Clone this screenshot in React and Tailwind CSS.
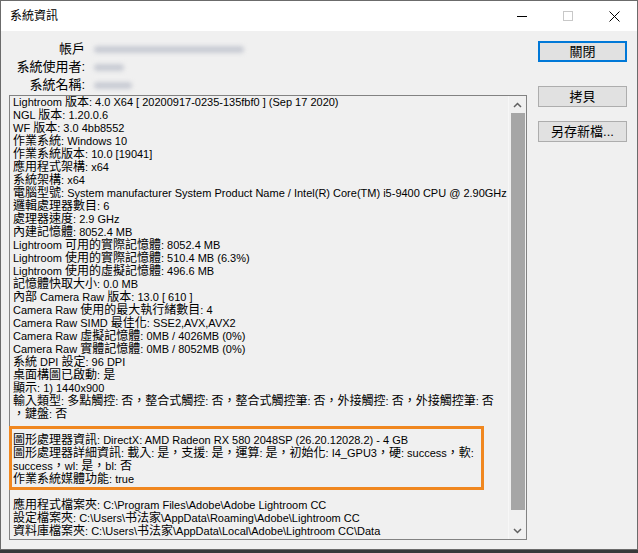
const lines = [
  'Lightroom 版本: 4.0 X64 [ 20200917-0235-135fbf0 ] (Sep 17 2020)',
  'NGL 版本: 1.20.0.6',
  'WF 版本: 3.0 4bb8552',
  '作業系統: Windows 10',
  '作業系統版本: 10.0 [19041]',
  '應用程式架構: x64',
  '系統架構: x64',
  '電腦型號: System manufacturer System Product Name / Intel(R) Core(TM) i5-9400 CPU @ 2.90GHz',
  '邏輯處理器數目: 6',
  '處理器速度: 2.9 GHz',
  '內建記憶體: 8052.4 MB',
  'Lightroom 可用的實際記憶體: 8052.4 MB',
  'Lightroom 使用的實際記憶體: 510.4 MB (6.3%)',
  'Lightroom 使用的虛擬記憶體: 496.6 MB',
  '記憶體快取大小: 0.0 MB',
  '內部 Camera Raw 版本: 13.0 [ 610 ]',
  'Camera Raw 使用的最大執行緒數目: 4',
  'Camera Raw SIMD 最佳化: SSE2,AVX,AVX2',
  'Camera Raw 虛擬記憶體: 0MB / 4026MB (0%)',
  'Camera Raw 實體記憶體: 0MB / 8052MB (0%)',
  '系統 DPI 設定: 96 DPI',
  '桌面構圖已啟動: 是',
  '顯示: 1) 1440x900',
  '輸入類型: 多點觸控: 否，整合式觸控: 否，整合式觸控筆: 否，外接觸控: 否，外接觸控筆: 否',
  '，鍵盤: 否',
  '',
  '圖形處理器資訊: DirectX: AMD Radeon RX 580 2048SP (26.20.12028.2) - 4 GB',
  '圖形處理器詳細資訊: 載入: 是，支援: 是，運算: 是，初始化: I4_GPU3，硬: success，軟:',
  'success，wl: 是，bl: 否',
  '作業系統媒體功能: true',
  '',
  '應用程式檔案夾: C:\\Program Files\\Adobe\\Adobe Lightroom CC',
  '設定檔案夾: C:\\Users\\书法家\\AppData\\Roaming\\Adobe\\Lightroom CC',
  '資料庫檔案夾: C:\\Users\\书法家\\AppData\\Local\\Adobe\\Lightroom CC\\Data',
];

const font = { fontFamily: '"Liberation Sans", "Noto Sans CJK TC", sans-serif' };

// CJK glyphs are drawn wider than the latin ones in the original dialog,
// so the two get their own sizes
const splitRuns = (s) => s.match(/[\u3000-\u303f\u4e00-\u9fff\uff00-\uffef]+|[^\u3000-\u303f\u4e00-\u9fff\uff00-\uffef]+/g) || [];
const isCjk = (r) => /[\u3000-\u303f\u4e00-\u9fff\uff00-\uffef]/.test(r);

const Line = ({ text }) => (
  <div className="flex h-[13px] items-center">
    {splitRuns(text).map((r, i) =>
      isCjk(r) ? (
        <span key={i} className="whitespace-pre text-[12px] leading-[13px]">{r}</span>
      ) : (
        <span key={i} className="whitespace-pre text-[11px] leading-[13px]">{r}</span>
      )
    )}
  </div>
);

const Button = ({ children, focused }) => (
  <button
    className={
      focused
        ? 'h-[21px] w-[89px] border-2 border-[#0078d7] bg-[#e1e1e1] text-[13px] leading-none text-black'
        : 'h-[21px] w-[89px] border border-[#adadad] bg-[#e1e1e1] text-[13px] leading-none text-black'
    }
  >
    {children}
  </button>
);

const Blur = ({ w }) => (
  <div className={`h-[7px] rounded-full bg-[#c9ccd4] blur-[2px] ${w}`} />
);

export default function App() {
  return (
    <div
      className="flex h-[553px] w-[638px] flex-col overflow-hidden bg-[#3a3a3a] text-black"
      style={font}
    >
      <div className="flex h-[550px] flex-col border border-[#6b6b6b] bg-[#f0f0f0]">
        {/* title bar */}
        <div className="flex h-[30px] items-center bg-white">
          <span className="pl-[9px] text-[12px]">系統資訊</span>
          <div className="ml-auto flex h-full items-center">
            <div className="flex h-full w-[46px] items-center justify-center">
              <div className="h-px w-[10px] bg-black" />
            </div>
            <div className="flex h-full w-[46px] items-center justify-center">
              <div className="h-[10px] w-[10px] border border-[#c8c8c8]" />
            </div>
            <div className="flex h-full w-[46px] items-center justify-center">
              <svg width="11" height="11" viewBox="0 0 11 11">
                <path d="M0.5 0.5 L10.5 10.5 M10.5 0.5 L0.5 10.5" stroke="#000" strokeWidth="1" />
              </svg>
            </div>
          </div>
        </div>

        <div className="flex flex-1 pl-[8px] pr-[10px]">
          <div className="flex w-[519px] flex-col">
            {/* header fields */}
            <div className="flex flex-col pt-[9px] text-[13px] leading-[18px]">
              <div className="flex items-center">
                <span className="w-[76px] text-right">帳戶</span>
                <div className="ml-[9px]"><Blur w="w-[150px]" /></div>
              </div>
              <div className="flex items-center">
                <span className="w-[76px] text-right">系統使用者:</span>
                <div className="ml-[9px]"><Blur w="w-[30px]" /></div>
              </div>
              <div className="flex items-center">
                <span className="w-[76px] text-right">系統名稱:</span>
                <div className="ml-[9px]"><Blur w="w-[38px]" /></div>
              </div>
            </div>

            {/* text box */}
            <div className="relative mt-[1px] flex h-[445px] border border-[#828282] bg-[#f0f0f0]">
              <div className="flex-1 overflow-hidden pl-[3px] whitespace-nowrap">
                {lines.map((l, i) => (
                  <Line key={i} text={l} />
                ))}
              </div>
              <div className="flex w-[18px] flex-col items-center border-l border-[#f7f7f7] pt-[3px] pb-[3px]">
                <svg width="9" height="6" viewBox="0 0 9 6" className="mt-[3px]">
                  <path d="M1 5 L4.5 1.5 L8 5" fill="none" stroke="#606060" strokeWidth="1.5" />
                </svg>
                <div className="mt-[5px] h-[397px] w-[14px] bg-[#a6a6a6]" />
                <svg width="9" height="6" viewBox="0 0 9 6" className="mt-auto mb-[2px]">
                  <path d="M1 1 L4.5 4.5 L8 1" fill="none" stroke="#606060" strokeWidth="1.5" />
                </svg>
              </div>
              {/* highlight annotation */}
              <div className="pointer-events-none absolute left-[-1px] top-[330px] h-[64px] w-[475px] border-[3px] border-[#f0871f]" />
            </div>
          </div>

          <div className="ml-[11px] flex flex-col pt-[10px]">
            <Button focused>關閉</Button>
            <div className="mt-[22px]"><Button>拷貝</Button></div>
            <div className="mt-[11px]"><Button>另存新檔...</Button></div>
          </div>
        </div>
      </div>
    </div>
  );
}
